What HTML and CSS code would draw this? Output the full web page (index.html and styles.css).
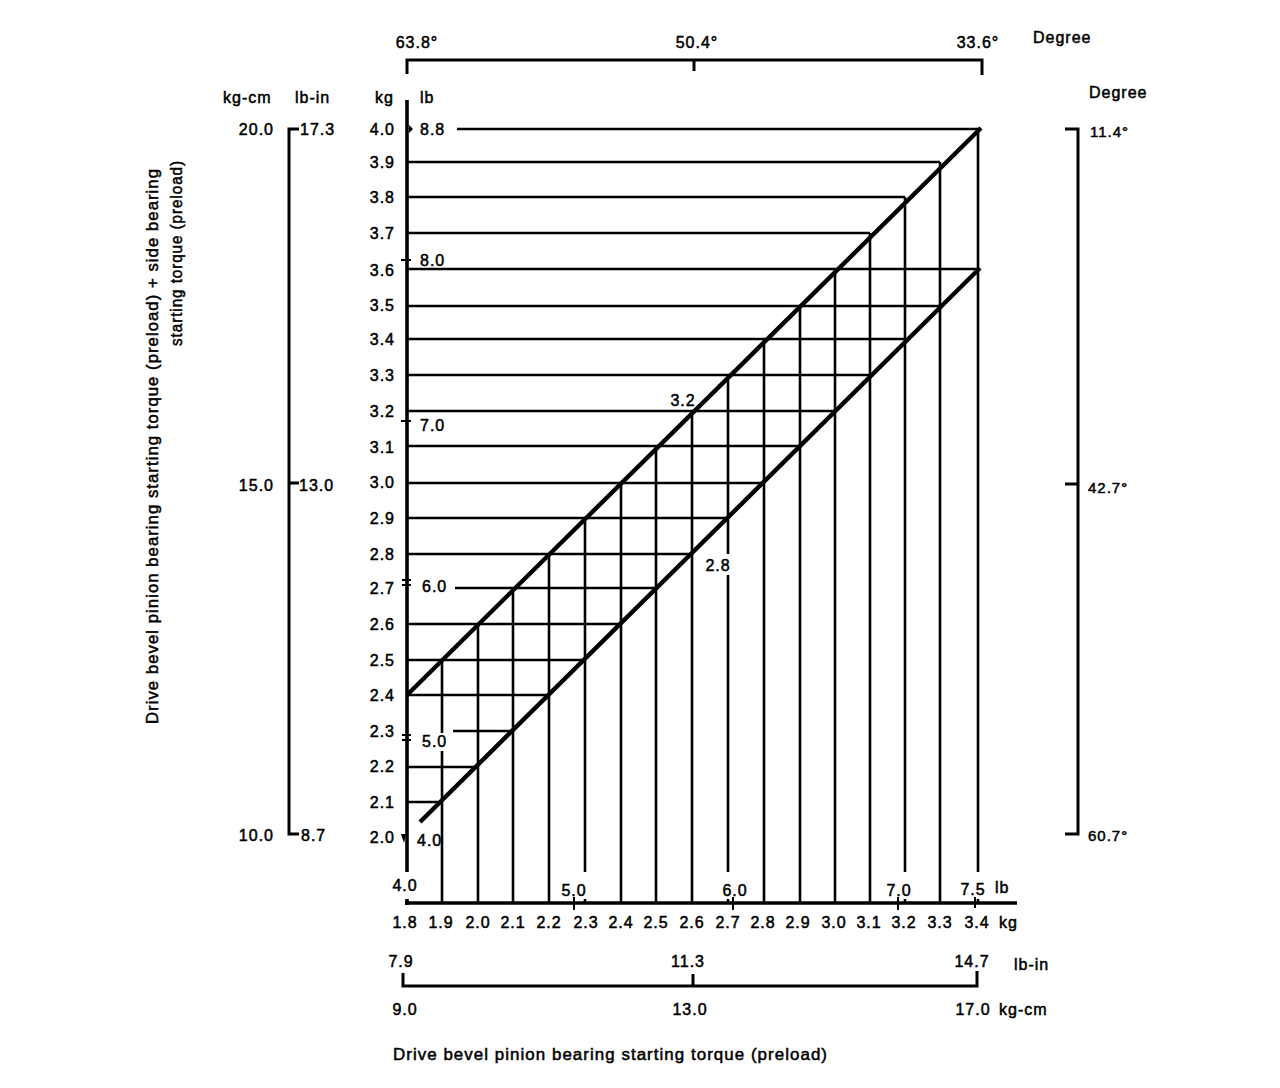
FILE: index.html
```html
<!DOCTYPE html>
<html lang="en">
<head>
<meta charset="utf-8">
<title>Drive bevel pinion bearing starting torque chart</title>
<link rel="stylesheet" href="styles.css">
</head>
<body>
<svg class="chart" width="1280" height="1088" viewBox="0 0 1280 1088" xmlns="http://www.w3.org/2000/svg">
  <!-- top degree scale -->
  <g class="bracket">
    <path d="M407 74 V60 H982 V75"/>
    <line x1="694" y1="60" x2="694" y2="71"/>
  </g>
  <g class="t">
    <text x="417" y="48" text-anchor="middle">63.8°</text>
    <text x="697" y="48" text-anchor="middle">50.4°</text>
    <text x="978" y="48" text-anchor="middle">33.6°</text>
    <text x="1033" y="43">Degree</text>
  </g>

  <!-- header row -->
  <g class="t">
    <text x="223" y="103">kg-cm</text>
    <text x="295" y="103">lb-in</text>
    <text x="394" y="103" text-anchor="end">kg</text>
    <text x="420" y="103">lb</text>
    <text x="1089" y="98">Degree</text>
  </g>

  <!-- left kg-cm / lb-in scale -->
  <g class="bracket">
    <path d="M299 129 H289 V834 H299"/>
    <line x1="289" y1="483" x2="299" y2="483"/>
  </g>
  <g class="t">
    <text x="274" y="135" text-anchor="end">20.0</text>
    <text x="274" y="491" text-anchor="end">15.0</text>
    <text x="274" y="841" text-anchor="end">10.0</text>
    <text x="300" y="135">17.3</text>
    <text x="299" y="491">13.0</text>
    <text x="301" y="841">8.7</text>
  </g>

  <!-- right degree scale -->
  <g class="bracket">
    <path d="M1065 129 H1078 V834 H1065"/>
    <line x1="1065" y1="484" x2="1078" y2="484"/>
  </g>
  <g class="t small">
    <text x="1090" y="137">11.4°</text>
    <text x="1088" y="493">42.7°</text>
    <text x="1088" y="841">60.7°</text>
  </g>

  <!-- rotated axis title -->
  <g class="t">
    <text transform="translate(158 168) rotate(-90)" text-anchor="end" textLength="556" lengthAdjust="spacingAndGlyphs">Drive bevel pinion bearing starting torque (preload) + side bearing</text>
    <text transform="translate(182 160) rotate(-90)" text-anchor="end" textLength="186" lengthAdjust="spacingAndGlyphs">starting torque (preload)</text>
  </g>

  <!-- horizontal grid -->
  <g class="grid">
    <line x1="457" y1="129" x2="979" y2="129"/>
    <line x1="407" y1="162" x2="940" y2="162"/>
    <line x1="407" y1="197" x2="905" y2="197"/>
    <line x1="407" y1="233" x2="870" y2="233"/>
    <line x1="407" y1="269" x2="979" y2="269"/>
    <line x1="407" y1="306" x2="940" y2="306"/>
    <line x1="407" y1="339" x2="905" y2="339"/>
    <line x1="407" y1="375" x2="870" y2="375"/>
    <line x1="407" y1="411" x2="835" y2="411"/>
    <line x1="407" y1="446" x2="800" y2="446"/>
    <line x1="407" y1="483" x2="764" y2="483"/>
    <line x1="407" y1="518" x2="728" y2="518"/>
    <line x1="407" y1="554" x2="692" y2="554"/>
    <line x1="455" y1="588" x2="656" y2="588"/>
    <line x1="407" y1="624" x2="621" y2="624"/>
    <line x1="407" y1="660" x2="585" y2="660"/>
    <line x1="407" y1="695" x2="549" y2="695"/>
    <line x1="453" y1="731" x2="513" y2="731"/>
    <line x1="407" y1="767" x2="478" y2="767"/>
    <line x1="407" y1="802" x2="442" y2="802"/>
  </g>

  <!-- vertical grid -->
  <g class="grid">
    <line x1="442" y1="660" x2="442" y2="903"/>
    <line x1="478" y1="624" x2="478" y2="903"/>
    <line x1="513" y1="588" x2="513" y2="903"/>
    <line x1="549" y1="554" x2="549" y2="903"/>
    <line x1="585" y1="518" x2="585" y2="903"/>
    <line x1="621" y1="483" x2="621" y2="903"/>
    <line x1="656" y1="446" x2="656" y2="903"/>
    <line x1="692" y1="411" x2="692" y2="903"/>
    <line x1="728" y1="375" x2="728" y2="554"/>
    <line x1="728" y1="575" x2="728" y2="903"/>
    <line x1="764" y1="339" x2="764" y2="903"/>
    <line x1="800" y1="306" x2="800" y2="903"/>
    <line x1="835" y1="269" x2="835" y2="903"/>
    <line x1="870" y1="233" x2="870" y2="903"/>
    <line x1="905" y1="197" x2="905" y2="903"/>
    <line x1="940" y1="162" x2="940" y2="903"/>
    <line x1="978" y1="129" x2="978" y2="903"/>
  </g>

  <!-- diagonals -->
  <g class="diag">
    <line x1="407" y1="695" x2="981" y2="128"/>
    <line x1="420" y1="822" x2="980" y2="268"/>
  </g>

  <!-- main axes -->
  <g class="axis">
    <line x1="407" y1="100" x2="407" y2="905"/>
    <line x1="405" y1="903" x2="1017" y2="903"/>
  </g>

  <!-- label masks over grid lines -->
  <g class="mask">
    <rect x="392" y="872" width="28" height="27"/>
    <rect x="559" y="872" width="30" height="27"/>
    <rect x="720" y="872" width="29" height="27"/>
    <rect x="885" y="872" width="29" height="27"/>
    <rect x="959" y="872" width="29" height="27"/>
    <rect x="421" y="733" width="28" height="18"/>
    <rect x="704" y="555" width="30" height="20"/>
  </g>

  <!-- lb ticks on axes -->
  <g class="tick">
    <path d="M409 125 L413 129 L409 133 Z" class="solid"/>
    <line x1="401" y1="260" x2="411" y2="260"/>
    <line x1="401" y1="421" x2="411" y2="421"/>
    <line x1="402" y1="580" x2="411" y2="580"/>
    <line x1="402" y1="585" x2="411" y2="585"/>
    <line x1="402" y1="735" x2="411" y2="735"/>
    <line x1="402" y1="740" x2="411" y2="740"/>
    <path d="M401 834 L406 834 L404 843 Z" class="solid"/>
    <line x1="574" y1="897" x2="574" y2="910"/>
    <line x1="733" y1="897" x2="733" y2="910"/>
    <line x1="898" y1="897" x2="898" y2="910"/>
    <line x1="975" y1="897" x2="975" y2="908"/>
  </g>

  <!-- left kg labels -->
  <g class="t" text-anchor="end">
    <text x="395" y="135">4.0</text>
    <text x="395" y="168">3.9</text>
    <text x="395" y="203">3.8</text>
    <text x="395" y="239">3.7</text>
    <text x="395" y="276">3.6</text>
    <text x="395" y="311">3.5</text>
    <text x="395" y="345">3.4</text>
    <text x="395" y="381">3.3</text>
    <text x="395" y="417">3.2</text>
    <text x="395" y="453">3.1</text>
    <text x="395" y="488">3.0</text>
    <text x="395" y="524">2.9</text>
    <text x="395" y="560">2.8</text>
    <text x="395" y="594">2.7</text>
    <text x="395" y="630">2.6</text>
    <text x="395" y="666">2.5</text>
    <text x="395" y="701">2.4</text>
    <text x="395" y="737">2.3</text>
    <text x="395" y="772">2.2</text>
    <text x="395" y="808">2.1</text>
    <text x="395" y="843">2.0</text>
  </g>

  <!-- left lb labels -->
  <g class="t">
    <text x="420" y="135">8.8</text>
    <text x="420" y="266">8.0</text>
    <text x="420" y="431">7.0</text>
    <text x="422" y="592">6.0</text>
    <text x="422" y="747">5.0</text>
    <text x="417" y="846">4.0</text>
  </g>

  <!-- inner labels -->
  <g class="t">
    <text x="683" y="406" text-anchor="middle">3.2</text>
    <text x="718" y="571" text-anchor="middle">2.8</text>
  </g>

  <!-- bottom lb labels -->
  <g class="t" text-anchor="middle">
    <text x="405" y="891">4.0</text>
    <text x="574" y="896">5.0</text>
    <text x="735" y="896">6.0</text>
    <text x="899" y="896">7.0</text>
    <text x="973" y="895">7.5</text>
  </g>
  <text class="t" x="995" y="893">lb</text>

  <!-- bottom kg labels -->
  <g class="t" text-anchor="middle">
    <text x="405" y="928">1.8</text>
    <text x="441" y="928">1.9</text>
    <text x="478" y="928">2.0</text>
    <text x="513" y="928">2.1</text>
    <text x="549" y="928">2.2</text>
    <text x="586" y="928">2.3</text>
    <text x="621" y="928">2.4</text>
    <text x="656" y="928">2.5</text>
    <text x="692" y="928">2.6</text>
    <text x="728" y="928">2.7</text>
    <text x="763" y="928">2.8</text>
    <text x="798" y="928">2.9</text>
    <text x="834" y="928">3.0</text>
    <text x="869" y="928">3.1</text>
    <text x="904" y="928">3.2</text>
    <text x="940" y="928">3.3</text>
    <text x="977" y="928">3.4</text>
  </g>
  <text class="t" x="999" y="928">kg</text>

  <!-- bottom lb-in / kg-cm scale -->
  <g class="bracket">
    <path d="M403 973 V986 H977 V971"/>
    <line x1="693" y1="974" x2="693" y2="986"/>
  </g>
  <g class="t" text-anchor="middle">
    <text x="401" y="967">7.9</text>
    <text x="688" y="967">11.3</text>
    <text x="972" y="967">14.7</text>
    <text x="405" y="1015">9.0</text>
    <text x="690" y="1015">13.0</text>
    <text x="973" y="1015">17.0</text>
  </g>
  <text class="t" x="1014" y="970">lb-in</text>
  <text class="t" x="999" y="1015">kg-cm</text>

  <text class="t" x="393" y="1060" textLength="435" lengthAdjust="spacingAndGlyphs">Drive bevel pinion bearing starting torque (preload)</text>
</svg>
</body>
</html>
```

FILE: styles.css
```css
html, body {
  margin: 0;
  padding: 0;
  background: #ffffff;
}

.chart {
  display: block;
  width: 1280px;
  height: 1088px;
  background: #ffffff;
}

.t {
  font-family: "Liberation Sans", Arial, Helvetica, sans-serif;
  font-size: 16px;
  letter-spacing: 1px;
  fill: #000000;
  stroke: #000000;
  stroke-width: 0.5px;
}

.t.small {
  font-size: 15px;
}

.grid line {
  stroke: #000000;
  stroke-width: 2.6;
}

.diag line {
  stroke: #000000;
  stroke-width: 4.4;
}

.axis line {
  stroke: #000000;
  stroke-width: 3.6;
}

.bracket path,
.bracket line {
  fill: none;
  stroke: #000000;
  stroke-width: 3;
}

.tick line {
  stroke: #000000;
  stroke-width: 2;
}

.tick .solid {
  fill: #000000;
  stroke: none;
}

.mask rect {
  fill: #ffffff;
  stroke: none;
}
```
